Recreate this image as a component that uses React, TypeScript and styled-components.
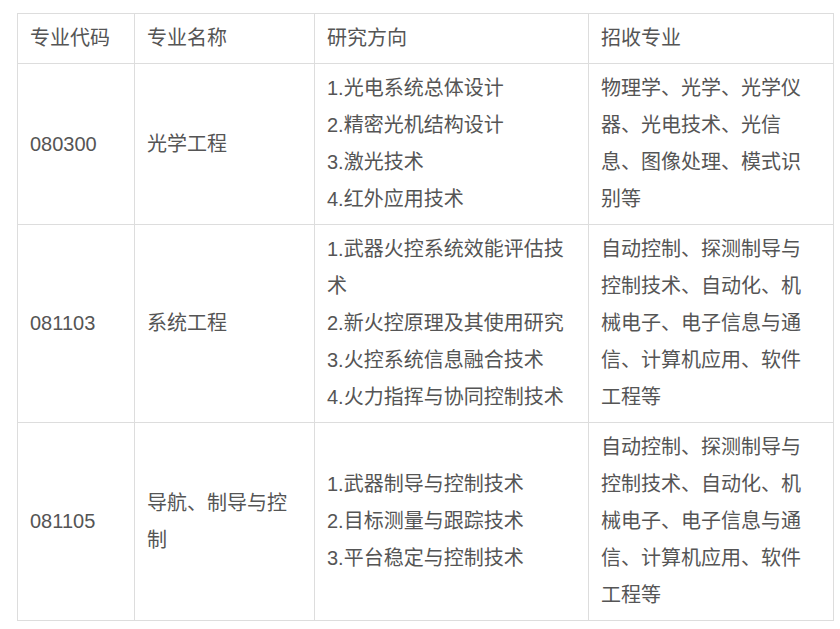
import styled, { createGlobalStyle } from 'styled-components';

const GlobalStyle = createGlobalStyle`
  html, body {
    margin: 0;
    padding: 0;
    background: #fff;
  }
`;

const Page = styled.div`
  padding: 13px 0 0 17px;
`;

const Table = styled.table`
  width: 816px;
  border-collapse: collapse;
  table-layout: fixed;
  font-family: "Liberation Sans", "Noto Sans CJK SC", sans-serif;
  font-size: 20px;
  line-height: 37px;
  color: #555;
`;

const Cell = styled.td<{ $valign?: string }>`
  border: 1px solid #ddd;
  padding: 6px 14px 6px 12px;
  vertical-align: ${(p) => p.$valign || 'middle'};
  text-align: left;
  font-weight: normal;
  word-break: break-all;
`;

const Head = styled(Cell).attrs({ as: 'th' })``;

const Line = styled.div``;

interface Row {
  code: string;
  name: string;
  directions: string[];
  majors: string;
}

const rows: Row[] = [
  {
    code: '080300',
    name: '光学工程',
    directions: ['1.光电系统总体设计', '2.精密光机结构设计', '3.激光技术', '4.红外应用技术'],
    majors: '物理学、光学、光学仪器、光电技术、光信息、图像处理、模式识别等',
  },
  {
    code: '081103',
    name: '系统工程',
    directions: [
      '1.武器火控系统效能评估技术',
      '2.新火控原理及其使用研究',
      '3.火控系统信息融合技术',
      '4.火力指挥与协同控制技术',
    ],
    majors: '自动控制、探测制导与控制技术、自动化、机械电子、电子信息与通信、计算机应用、软件工程等',
  },
  {
    code: '081105',
    name: '导航、制导与控制',
    directions: ['1.武器制导与控制技术', '2.目标测量与跟踪技术', '3.平台稳定与控制技术'],
    majors: '自动控制、探测制导与控制技术、自动化、机械电子、电子信息与通信、计算机应用、软件工程等',
  },
];

export default function App() {
  return (
    <>
      <GlobalStyle />
      <Page>
        <Table>
          <colgroup>
            <col style={{ width: 117 }} />
            <col style={{ width: 180 }} />
            <col style={{ width: 274 }} />
            <col style={{ width: 245 }} />
          </colgroup>
          <thead>
            <tr>
              <Head>专业代码</Head>
              <Head>专业名称</Head>
              <Head>研究方向</Head>
              <Head>招收专业</Head>
            </tr>
          </thead>
          <tbody>
            {rows.map((r) => (
              <tr key={r.code}>
                <Cell>{r.code}</Cell>
                <Cell>{r.name}</Cell>
                <Cell>
                  {r.directions.map((d) => (
                    <Line key={d}>{d}</Line>
                  ))}
                </Cell>
                <Cell>{r.majors}</Cell>
              </tr>
            ))}
          </tbody>
        </Table>
      </Page>
    </>
  );
}
